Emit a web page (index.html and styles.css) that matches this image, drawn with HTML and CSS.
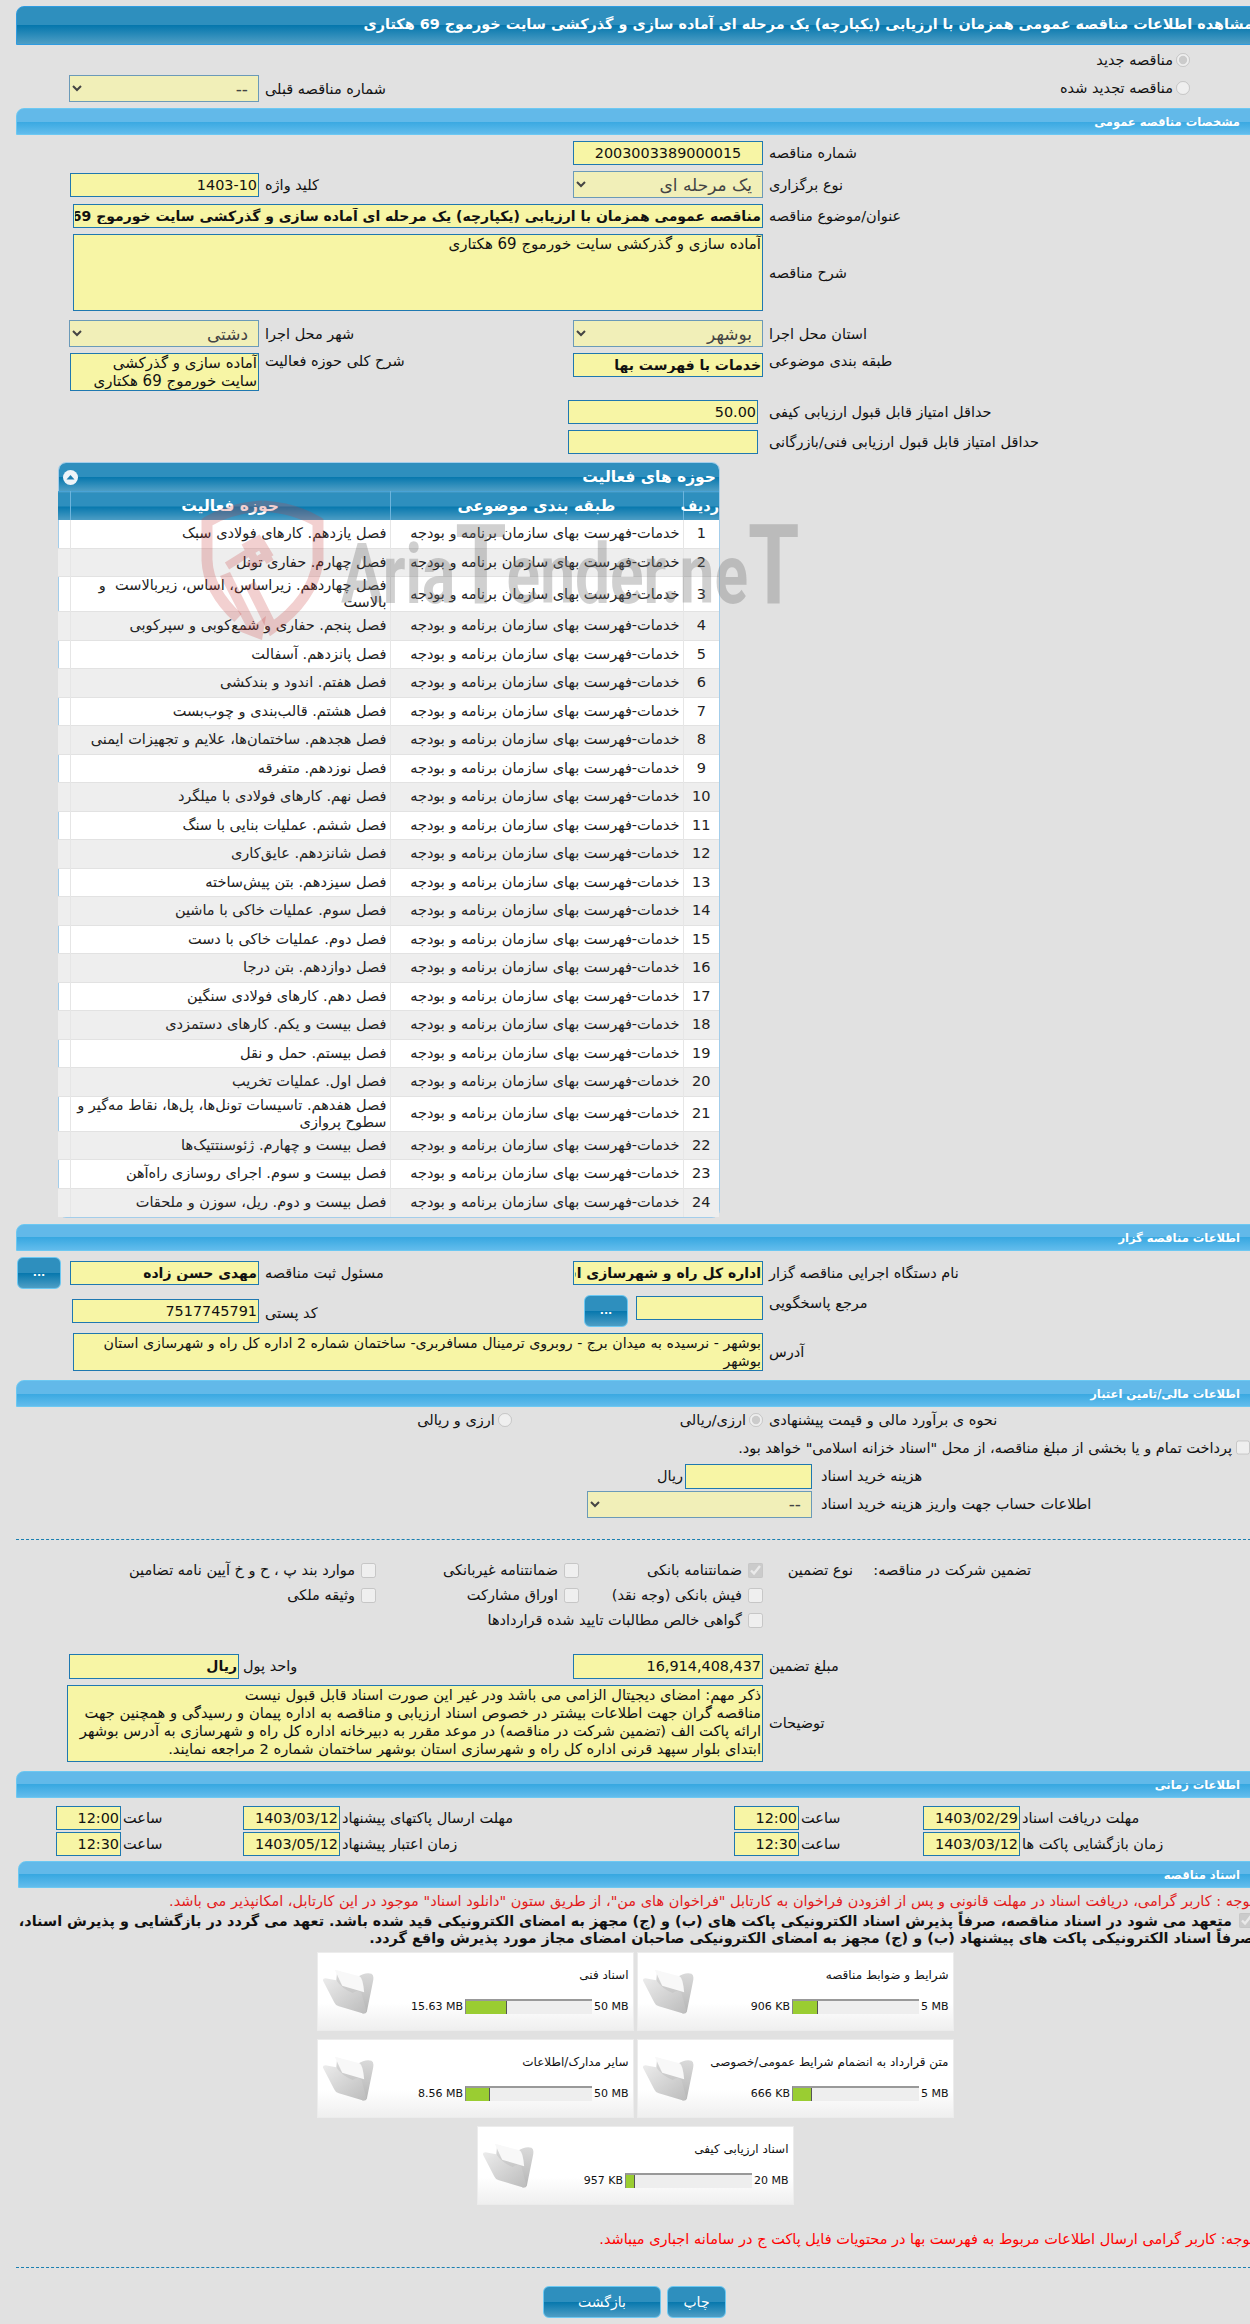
FILE: index.html
```html
<!DOCTYPE html>
<html lang="fa" dir="rtl">
<head>
    <meta charset="utf-8">
    <title>مشاهده اطلاعات مناقصه</title>
    <link rel="stylesheet" href="styles.css">
</head>
<body>
<div class="page">
    <div class="title">مشاهده اطلاعات مناقصه عمومی همزمان با ارزیابی (یکپارچه) یک مرحله ای آماده سازی و گذرکشی سایت خورموج 69 هکتاری</div>

    <div class="opt-line first"><label class="opt"><input type="radio" name="kind" disabled checked>مناقصه جدید</label></div>
    <div class="row second">
        <div class="lbl"><label class="opt"><input type="radio" name="kind" disabled>مناقصه تجدید شده</label></div>
        <div></div>
        <div class="lbl">شماره مناقصه قبلی</div>
        <select class="sel" disabled><option>--</option></select>
    </div>

    <div class="bar">مشخصات مناقصه عمومی</div>

    <div class="row">
        <div class="lbl">شماره مناقصه</div>
        <input class="fld ltr-num" readonly value="2003003389000015">
    </div>
    <div class="row">
        <div class="lbl">نوع برگزاری</div>
        <select class="sel" disabled><option>یک مرحله ای</option></select>
        <div class="lbl">کلید واژه</div>
        <input class="fld key" readonly value="1403-10">
    </div>
    <div class="row wide">
        <div class="lbl">عنوان/موضوع مناقصه</div>
        <input class="fld bold" readonly value="مناقصه عمومی همزمان با ارزیابی (یکپارچه) یک مرحله ای آماده سازی و گذرکشی سایت خورموج 69 هکتاری">
    </div>
    <div class="row wide">
        <div class="lbl">شرح مناقصه</div>
        <textarea class="fld desc" readonly>آماده سازی و گذرکشی سایت خورموج 69 هکتاری</textarea>
    </div>
    <div class="row mt9">
        <div class="lbl">استان محل اجرا</div>
        <select class="sel" disabled><option>بوشهر</option></select>
        <div class="lbl">شهر محل اجرا</div>
        <select class="sel" disabled><option>دشتی</option></select>
    </div>
    <div class="row top">
        <div class="lbl">طبقه بندی موضوعی</div>
        <input class="fld bold" readonly value="خدمات با فهرست بها">
        <div class="lbl">شرح کلی حوزه فعالیت</div>
        <textarea class="fld scope" readonly>آماده سازی و گذرکشی سایت خورموج 69 هکتاری</textarea>
    </div>
    <div class="row mt9">
        <div class="lbl">حداقل امتیاز قابل قبول ارزیابی کیفی</div>
        <input class="fld shift" readonly value="50.00">
    </div>
    <div class="row">
        <div class="lbl">حداقل امتیاز قابل قبول ارزیابی فنی/بازرگانی</div>
        <input class="fld shift" readonly>
    </div>

    <div class="panel">
        <div class="panel-head">
            <span>حوزه های فعالیت</span>
            <svg class="collapse" viewBox="0 0 15 15"><circle cx="7.5" cy="7.5" r="7.5" fill="#eef4f8"/><path d="M3.5 9.5 L7.5 5 L11.5 9.5 Z" fill="#1f7fb0"/></svg>
        </div>
        <table class="grid">
            <thead>
                <tr><th class="c-no">ردیف</th><th class="c-cat">طبقه بندی موضوعی</th><th class="c-act">حوزه فعالیت</th><th class="c-end"></th></tr>
            </thead>
            <tbody>
                <tr><td class="num">1</td><td>خدمات-فهرست بهای سازمان برنامه و بودجه</td><td>فصل یازدهم. کارهای فولادی سبک</td><td></td></tr>
                <tr><td class="num">2</td><td>خدمات-فهرست بهای سازمان برنامه و بودجه</td><td>فصل چهارم. حفاری تونل</td><td></td></tr>
                <tr class="tall"><td class="num">3</td><td>خدمات-فهرست بهای سازمان برنامه و بودجه</td><td>فصل چهاردهم. زیراساس، اساس، زیربالاست&nbsp; و بالاست</td><td></td></tr>
                <tr><td class="num">4</td><td>خدمات-فهرست بهای سازمان برنامه و بودجه</td><td>فصل پنجم. حفاری و شمع‌کوبی و سپرکوبی</td><td></td></tr>
                <tr><td class="num">5</td><td>خدمات-فهرست بهای سازمان برنامه و بودجه</td><td>فصل پانزدهم. آسفالت</td><td></td></tr>
                <tr><td class="num">6</td><td>خدمات-فهرست بهای سازمان برنامه و بودجه</td><td>فصل هفتم. اندود و بندکشی</td><td></td></tr>
                <tr><td class="num">7</td><td>خدمات-فهرست بهای سازمان برنامه و بودجه</td><td>فصل هشتم. قالب‌بندی و چوب‌بست</td><td></td></tr>
                <tr><td class="num">8</td><td>خدمات-فهرست بهای سازمان برنامه و بودجه</td><td>فصل هجدهم. ساختمان‌ها، علایم و تجهیزات ایمنی</td><td></td></tr>
                <tr><td class="num">9</td><td>خدمات-فهرست بهای سازمان برنامه و بودجه</td><td>فصل نوزدهم. متفرقه</td><td></td></tr>
                <tr><td class="num">10</td><td>خدمات-فهرست بهای سازمان برنامه و بودجه</td><td>فصل نهم. کارهای فولادی با میلگرد</td><td></td></tr>
                <tr><td class="num">11</td><td>خدمات-فهرست بهای سازمان برنامه و بودجه</td><td>فصل ششم. عملیات بنایی با سنگ</td><td></td></tr>
                <tr><td class="num">12</td><td>خدمات-فهرست بهای سازمان برنامه و بودجه</td><td>فصل شانزدهم. عایق‌کاری</td><td></td></tr>
                <tr><td class="num">13</td><td>خدمات-فهرست بهای سازمان برنامه و بودجه</td><td>فصل سیزدهم. بتن پیش‌ساخته</td><td></td></tr>
                <tr><td class="num">14</td><td>خدمات-فهرست بهای سازمان برنامه و بودجه</td><td>فصل سوم. عملیات خاکی با ماشین</td><td></td></tr>
                <tr><td class="num">15</td><td>خدمات-فهرست بهای سازمان برنامه و بودجه</td><td>فصل دوم. عملیات خاکی با دست</td><td></td></tr>
                <tr><td class="num">16</td><td>خدمات-فهرست بهای سازمان برنامه و بودجه</td><td>فصل دوازدهم. بتن درجا</td><td></td></tr>
                <tr><td class="num">17</td><td>خدمات-فهرست بهای سازمان برنامه و بودجه</td><td>فصل دهم. کارهای فولادی سنگین</td><td></td></tr>
                <tr><td class="num">18</td><td>خدمات-فهرست بهای سازمان برنامه و بودجه</td><td>فصل بیست و یکم. کارهای دستمزدی</td><td></td></tr>
                <tr><td class="num">19</td><td>خدمات-فهرست بهای سازمان برنامه و بودجه</td><td>فصل بیستم. حمل و نقل</td><td></td></tr>
                <tr><td class="num">20</td><td>خدمات-فهرست بهای سازمان برنامه و بودجه</td><td>فصل اول. عملیات تخریب</td><td></td></tr>
                <tr class="tall"><td class="num">21</td><td>خدمات-فهرست بهای سازمان برنامه و بودجه</td><td>فصل هفدهم. تاسیسات تونل‌ها، پل‌ها، نقاط مه‌گیر و سطوح پروازی</td><td></td></tr>
                <tr><td class="num">22</td><td>خدمات-فهرست بهای سازمان برنامه و بودجه</td><td>فصل بیست و چهارم. ژئوسنتتیک‌ها</td><td></td></tr>
                <tr><td class="num">23</td><td>خدمات-فهرست بهای سازمان برنامه و بودجه</td><td>فصل بیست و سوم. اجرای روسازی راه‌آهن</td><td></td></tr>
                <tr><td class="num">24</td><td>خدمات-فهرست بهای سازمان برنامه و بودجه</td><td>فصل بیست و دوم. ریل، سوزن و ملحقات</td><td></td></tr>
            </tbody>
        </table>
        <!-- site watermark -->
        <div class="watermark">
            <svg class="wm-logo" viewBox="0 0 126 140">
                <path d="M63 6 Q95 8 118 22 L118 62 Q112 100 72 128 L50 84" fill="none" stroke="#c83c3c" stroke-opacity=".24" stroke-width="11"/>
                <path d="M38 118 Q8 90 7 60 L7 22 Q30 8 63 6" fill="none" stroke="#c83c3c" stroke-opacity=".24" stroke-width="11"/>
                <path d="M27 66 L62 44 L68 54 L48 66 L56 62 L47 46 L58 40 L70 62" fill="none" stroke="#c83c3c" stroke-opacity=".24" stroke-width="8"/>
                <path d="M30 72 L56 124 L66 116 L62 140 L36 130 L46 126 L20 76 Z" fill="#c83c3c" fill-opacity=".24"/>
            </svg>
            <div class="wm-text">Aria<span class="wm-big">T</span>ender.ne<span class="wm-big">T</span></div>
        </div>
    </div>

    <div class="bar">اطلاعات مناقصه گزار</div>
    <div class="row org-a">
        <div class="lbl">نام دستگاه اجرایی مناقصه گزار</div>
        <input class="fld bold" readonly value="اداره کل راه و شهرسازی استان بوشهر">
        <div class="lbl">مسئول ثبت مناقصه</div>
        <div class="with-btn">
            <input class="fld bold key" readonly value="مهدي حسن زاده">
            <button class="btn dots" type="button">...</button>
        </div>
    </div>
    <div class="row org-b">
        <div class="lbl">مرجع پاسخگویی</div>
        <div class="ref">
            <input class="fld ref-in" readonly>
            <button class="btn dots" type="button">...</button>
        </div>
        <div class="lbl zip">کد پستی</div>
        <input class="fld zip-in" readonly value="7517745791">
    </div>
    <div class="row wide">
        <div class="lbl">آدرس</div>
        <textarea class="fld addr" readonly>بوشهر - نرسیده به میدان برج - روبروی ترمینال مسافربری- ساختمان شماره 2 اداره کل راه و شهرسازی استان بوشهر</textarea>
    </div>

    <div class="bar mt9">اطلاعات مالی/تامین اعتبار</div>
    <div class="row money">
        <div class="lbl">نحوه ی برآورد مالی و قیمت پیشنهادی</div>
        <div class="money-opts">
            <label class="opt"><input type="radio" name="cur" disabled checked>ارزی/ریالی</label>
            <label class="opt second-opt"><input type="radio" name="cur" disabled>ارزی و ریالی</label>
        </div>
    </div>
    <div class="treasury"><input type="checkbox" disabled>پرداخت تمام و یا بخشی از مبلغ مناقصه، از محل "اسناد خزانه اسلامی" خواهد بود.</div>
    <div class="row fee">
        <div class="lbl">هزینه خرید اسناد</div>
        <div class="fee-in"><input class="fld fee-box" readonly><span>ریال</span></div>
    </div>
    <div class="row fee acct">
        <div class="lbl">اطلاعات حساب جهت واریز هزینه خرید اسناد</div>
        <select class="sel" disabled><option>--</option></select>
    </div>

    <div class="dots-line"></div>

    <div class="guar g1">
        <div class="g-head"><span class="g-main">تضمین شرکت در مناقصه:</span><span>نوع تضمین</span></div>
        <label class="chk"><input type="checkbox" disabled checked>ضمانتنامه بانکی</label>
        <label class="chk"><input type="checkbox" disabled>ضمانتنامه غیربانکی</label>
        <label class="chk"><input type="checkbox" disabled>موارد بند پ ، ح و خ آیین نامه تضامین</label>
    </div>
    <div class="guar">
        <div></div>
        <label class="chk"><input type="checkbox" disabled>فیش بانکی (وجه نقد)</label>
        <label class="chk"><input type="checkbox" disabled>اوراق مشارکت</label>
        <label class="chk"><input type="checkbox" disabled>وثیقه ملکی</label>
    </div>
    <div class="guar">
        <div></div>
        <label class="chk"><input type="checkbox" disabled>گواهی خالص مطالبات تایید شده قراردادها</label>
    </div>

    <div class="row amount">
        <div class="lbl">مبلغ تضمین</div>
        <input class="fld" readonly value="16,914,408,437">
        <div class="lbl unit">واحد پول</div>
        <input class="fld bold" readonly value="ریال">
    </div>
    <div class="row wide notes-row">
        <div class="lbl">توضیحات</div>
        <textarea class="fld notes" readonly>ذکر مهم: امضای دیجیتال الزامی می باشد ودر غیر این صورت اسناد قابل قبول نیست
مناقصه گران جهت اطلاعات بیشتر در خصوص اسناد ارزیابی و مناقصه به اداره پیمان و رسیدگی و همچنین جهت ارائه پاکت الف (تضمین شرکت در مناقصه) در موعد مقرر به دبیرخانه اداره کل راه و شهرسازی به آدرس بوشهر ابتدای بلوار سپهد قرنی اداره کل راه و شهرسازی استان بوشهر ساختمان شماره 2 مراجعه نمایند.</textarea>
    </div>

    <div class="bar mt9">اطلاعات زمانی</div>
    <div class="times t1">
        <div class="lbl">مهلت دریافت اسناد</div>
        <input class="fld" readonly value="1403/02/29">
        <div class="lbl">ساعت</div>
        <input class="fld" readonly value="12:00">
        <div class="lbl">مهلت ارسال پاکتهای پیشنهاد</div>
        <input class="fld" readonly value="1403/03/12">
        <div class="lbl">ساعت</div>
        <input class="fld" readonly value="12:00">
    </div>
    <div class="times">
        <div class="lbl">زمان بازگشایی پاکت ها</div>
        <input class="fld" readonly value="1403/03/12">
        <div class="lbl">ساعت</div>
        <input class="fld" readonly value="12:30">
        <div class="lbl">زمان اعتبار پیشنهاد</div>
        <input class="fld" readonly value="1403/05/12">
        <div class="lbl">ساعت</div>
        <input class="fld" readonly value="12:30">
    </div>

    <div class="bar docs-bar">اسناد مناقصه</div>
    <div class="red-note">توجه : کاربر گرامی، دریافت اسناد در مهلت قانونی و پس از افزودن فراخوان به کارتابل "فراخوان های من"، از طریق ستون "دانلود اسناد" موجود در این کارتابل، امکانپذیر می باشد.</div>
    <div class="pledge"><input type="checkbox" disabled checked>متعهد می شود در اسناد مناقصه، صرفاً پذیرش اسناد الکترونیکی پاکت های (ب) و (ج) مجهز به امضای الکترونیکی قید شده باشد. تعهد می گردد در بازگشایی و پذیرش اسناد، صرفاً اسناد الکترونیکی پاکت های پیشنهاد (ب) و (ج) مجهز به امضای الکترونیکی صاحبان امضای مجاز مورد پذیرش واقع گردد.</div>

    <div class="cards">
        <div class="card">
            <div class="card-body">
                <div class="card-title">شرایط و ضوابط مناقصه</div>
                <div class="usage"><span>5 MB</span><div class="meter"><div class="meter-fill" style="width:19%"></div></div><span>906 KB</span></div>
            </div>
            <svg class="folder" viewBox="0 0 155 135"><use href="#folder-icon"/></svg>
        </div>
        <div class="card">
            <div class="card-body">
                <div class="card-title">اسناد فنی</div>
                <div class="usage"><span>50 MB</span><div class="meter"><div class="meter-fill" style="width:32%"></div></div><span>15.63 MB</span></div>
            </div>
            <svg class="folder" viewBox="0 0 155 135"><use href="#folder-icon"/></svg>
        </div>
        <div class="card">
            <div class="card-body">
                <div class="card-title">متن قرارداد به انضمام شرایط عمومی/خصوصی</div>
                <div class="usage"><span>5 MB</span><div class="meter"><div class="meter-fill" style="width:14%"></div></div><span>666 KB</span></div>
            </div>
            <svg class="folder" viewBox="0 0 155 135"><use href="#folder-icon"/></svg>
        </div>
        <div class="card">
            <div class="card-body">
                <div class="card-title">سایر مدارک/اطلاعات</div>
                <div class="usage"><span>50 MB</span><div class="meter"><div class="meter-fill" style="width:18%"></div></div><span>8.56 MB</span></div>
            </div>
            <svg class="folder" viewBox="0 0 155 135"><use href="#folder-icon"/></svg>
        </div>
        <div class="card">
            <div class="card-body">
                <div class="card-title">اسناد ارزیابی کیفی</div>
                <div class="usage"><span>20 MB</span><div class="meter"><div class="meter-fill" style="width:6%"></div></div><span>957 KB</span></div>
            </div>
            <svg class="folder" viewBox="0 0 155 135"><use href="#folder-icon"/></svg>
        </div>
    </div>

    <div class="red-note last">توجه: کاربر گرامی ارسال اطلاعات مربوط به فهرست بها در محتویات فایل پاکت ج در سامانه اجباری میباشد.</div>
    <div class="dots-line end"></div>
    <div class="actions">
        <button class="btn print" type="button">چاپ</button>
        <button class="btn back" type="button">بازگشت</button>
    </div>
    <div class="foot"></div>
</div>

<svg width="0" height="0" class="defs">
    <defs>
        <linearGradient id="fold-back" x1="0" y1="0" x2="0" y2="1"><stop offset="0" stop-color="#dcdcdc"/><stop offset="1" stop-color="#b4b4b4"/></linearGradient>
        <linearGradient id="fold-front" x1="0" y1="0" x2="1" y2="1"><stop offset="0" stop-color="#ececec"/><stop offset="1" stop-color="#bcbcbc"/></linearGradient>
        <g id="folder-icon">
            <path d="M45 5 L105 25 Q130 8 148 14 Q157 18 152 40 L134 128 Q130 136 120 133 L40 60 Z" fill="url(#fold-back)"/>
            <path d="M38 2 L112 22 Q122 26 126 70 L60 50 Z" fill="#f8f8f8"/>
            <path d="M3 36 Q0 28 10 28 L42 34 Q60 60 92 72 Q108 60 118 72 L132 124 Q133 136 118 132 L50 112 Q40 110 36 100 Z" fill="url(#fold-front)"/>
        </g>
    </defs>
</svg>
</body>
</html>
```

FILE: styles.css
```css
html, body {
    overflow: hidden;
}

body {
    margin: 0;
    background: #e1e1e1;
    color: #111;
    font-family: "DejaVu Sans", sans-serif;
    font-size: 14.5px;
}

.page {
    margin-left: 16px;
    margin-right: -16px;
}

.defs {
    position: absolute;
}

.title {
    box-sizing: border-box;
    margin-top: 6px;
    height: 39px;
    line-height: 35px;
    padding-right: 12px;
    border: 1px solid #2f9be0;
    border-radius: 8px 8px 0 0;
    background: linear-gradient(#2e8fbe 0, #2e8fbe 50%, #0677ad 50%, #4e9ec5 100%);
    color: #fff;
    font-size: 14.4px;
    font-weight: bold;
    white-space: nowrap;
}

.bar {
    box-sizing: border-box;
    margin-top: 6px;
    height: 27px;
    line-height: 26px;
    padding-right: 25px;
    border: 1px solid #6cc8f2;
    border-radius: 8px 8px 0 0;
    background: linear-gradient(#62b9e9 0, #62b9e9 50%, #38a8e1 50%, #62bcec 100%);
    color: #fff;
    font-size: 11.5px;
    font-weight: bold;
}

.bar.mt9 {
    margin-top: 9px;
}

.docs-bar {
    margin-top: 5px;
    margin-left: 2px;
}

.row {
    display: grid;
    grid-template-columns: 503px 190px 314px 190px 53px;
    align-items: center;
    margin-top: 6px;
}

.row.mt9 {
    margin-top: 9px;
}

.row.wide {
    grid-template-columns: 503px 690px 57px;
}

.row.top {
    align-items: start;
}

.lbl {
    padding-left: 6px;
    text-align: left;
    white-space: nowrap;
}

.opt {
    display: inline-flex;
    align-items: center;
    gap: 3px;
}

.opt input {
    margin: 0;
    width: 14px;
    height: 14px;
}

.opt-line {
    display: flex;
    align-items: center;
    height: 29px;
    padding-right: 76px;
}

.row.second {
    margin-top: 1px;
}

.row.second > .lbl:first-child {
    padding: 0 76px 0 0;
    text-align: right;
}

.fld {
    box-sizing: border-box;
    display: block;
    width: 100%;
    height: 24px;
    margin: 0;
    padding: 0 1px;
    border: 1px solid #1f78b0;
    border-radius: 0;
    outline: none;
    background: #f7f5a5;
    color: #111;
    font-family: "DejaVu Sans", sans-serif;
    font-size: 14.4px;
    resize: none;
    overflow: hidden;
}

.fld.bold {
    font-weight: bold;
    font-size: 14px;
}

.ltr-num {
    text-align: center;
}

.sel {
    box-sizing: border-box;
    width: 100%;
    height: 27px;
    margin: 0;
    padding: 0 6px 0 0;
    border: 1px solid #6b9ab8;
    border-radius: 0;
    background: #f1efb8;
    color: #444;
    font-family: "DejaVu Sans", sans-serif;
    font-size: 17px;
    opacity: 1;
}

.key {
    width: 189px;
}

.desc {
    height: 77px;
    font-size: 15px;
}

.scope {
    width: 189px;
    height: 38px;
    font-size: 15px;
    line-height: 18px;
}

.shift {
    margin-right: 5px;
}

/* activity table */
.panel {
    position: relative;
    box-sizing: border-box;
    width: 662px;
    margin: 8px 546px 0 0;
    border: 1px solid #a3cdea;
    border-radius: 8px;
    background: #fff;
}

.panel-head {
    display: flex;
    justify-content: space-between;
    align-items: center;
    box-sizing: border-box;
    height: 28px;
    padding: 0 3px 0 4px;
    border-radius: 7px 7px 0 0;
    background: linear-gradient(#2e8fbe 0, #2e8fbe 50%, #0677ad 50%, #4e9ec5 100%);
    color: #fff;
    font-size: 15.5px;
    font-weight: bold;
}

.collapse {
    width: 15px;
    height: 15px;
}

.grid {
    width: 100%;
    border-collapse: collapse;
    table-layout: fixed;
    font-size: 14.5px;
}

.grid th {
    box-sizing: border-box;
    height: 28px;
    padding: 0;
    border-left: 1px solid #6db4dc;
    border-top: 1px solid #4aa3d6;
    background: linear-gradient(#2e8fbe 0, #2e8fbe 50%, #0677ad 50%, #4e9ec5 100%);
    color: #fff;
    font-size: 15.5px;
    font-weight: bold;
}

.grid th.c-no {
    font-size: 14.5px;
}

.grid th:last-child {
    border-left: 0;
}

.c-no { width: 36px; }
.c-cat { width: 293px; }
.c-act { width: 320px; }
.c-end { width: 12px; }

.grid td {
    box-sizing: border-box;
    height: 28.5px;
    padding: 0 3px;
    border-top: 1px solid #e2e2e2;
    border-left: 1px solid #e6e6e6;
    text-align: right;
    line-height: 17px;
    color: #222;
}

.grid tbody tr:first-child td {
    border-top: 0;
}

.grid tr.tall td {
    height: 35px;
}

.grid td:last-child {
    border-left: 0;
}

.grid td.num {
    text-align: center;
    font-size: 14.5px;
}

.grid tbody tr:nth-child(even) td {
    background: #eee;
}

.watermark {
    position: absolute;
    left: 141px;
    top: 37px;
    pointer-events: none;
}

.wm-logo {
    display: block;
    width: 126px;
    height: 140px;
}

.wm-text {
    position: absolute;
    left: 141px;
    top: 20px;
    direction: ltr;
    white-space: nowrap;
    transform: scaleX(.74);
    transform-origin: left top;
    color: rgba(110, 110, 110, .32);
    font-family: Roboto, sans-serif;
    font-size: 84px;
    font-weight: bold;
    line-height: 90px;
}

.wm-big {
    font-size: 112px;
}

/* organiser */
.panel + .bar {
    margin-top: 6px;
}

.row.org-a {
    height: 32px;
}

.with-btn {
    display: flex;
    align-items: center;
    gap: 9px;
    margin-left: -53px;
}

.btn {
    border: 1px solid #6cc8f2;
    border-radius: 6px;
    background: linear-gradient(#2e8fbe 0, #2e8fbe 50%, #0677ad 50%, #4e9ec5 100%);
    color: #fff;
    font-family: "DejaVu Sans", sans-serif;
    font-size: 14px;
    padding: 0;
}

.dots {
    flex: none;
    width: 44px;
    height: 32px;
    font-size: 11px;
    font-weight: bold;
}

.row.org-b {
    height: 32px;
    align-items: start;
}

.ref {
    display: flex;
    gap: 8px;
    margin-left: -55px;
}

.ref-in {
    width: 127px;
    margin-top: 1px;
}

.zip {
    padding-top: 10px;
}

.zip-in {
    width: 187px;
    margin-top: 4px;
}

.addr {
    height: 38px;
    font-size: 14.2px;
    line-height: 18px;
}

/* financial */
.money {
    height: 27px;
    margin-top: 0;
}

.money-opts {
    display: flex;
    grid-column: 2 / 5;
}

.second-opt {
    margin-right: 168px;
}

.treasury {
    display: flex;
    align-items: center;
    gap: 3px;
    height: 24px;
    margin-top: 2px;
    padding-right: 16px;
}

.treasury input {
    margin: 0 0 0 1px;
    width: 14px;
    height: 15px;
}

.fee {
    grid-template-columns: 454px 225px 1fr;
    margin-top: 4px;
}

.fee .lbl {
    padding-left: 9px;
}

.fee-in {
    display: flex;
    align-items: center;
    gap: 2px;
}

.fee-box {
    width: 127px;
    height: 25px;
}

.acct {
    margin-top: 2px;
}

.dots-line {
    margin-top: 21px;
    border-top: 1px dashed #1a7fb0;
}

.guar {
    display: grid;
    grid-template-columns: 503px 184px 203px 1fr;
    align-items: center;
    height: 25px;
}

.guar.g1 {
    margin-top: 18px;
}

.g-head {
    display: flex;
    gap: 20px;
    padding-right: 235px;
}

.g-main {
    width: 158px;
    white-space: nowrap;
}

.chk {
    display: flex;
    align-items: center;
    gap: 6px;
    white-space: nowrap;
}

.chk input {
    flex: none;
    margin: 0;
    width: 15px;
    height: 15px;
}

.row.amount {
    grid-template-columns: 503px 190px 334px 170px 53px;
    margin-top: 21px;
}

.row.amount .fld {
    height: 25px;
}

.row.amount .unit {
    padding-left: 4px;
}

.row.notes-row {
    grid-template-columns: 503px 696px 51px;
}

.notes {
    height: 77px;
    font-size: 14.7px;
    line-height: 18px;
}

.times {
    display: grid;
    grid-template-columns: 246px 97px 124px 65px 394px 97px 122px 65px 40px;
    align-items: center;
    margin-top: 2px;
}

.times.t1 {
    margin-top: 8px;
}

.times .lbl {
    padding-left: 2px;
}

/* documents */
.red-note {
    height: 24px;
    margin-top: 1px;
    padding-right: 12px;
    line-height: 24px;
    color: #e21b1b;
    white-space: nowrap;
}

.pledge {
    box-sizing: border-box;
    padding-right: 12px;
    font-size: 14.4px;
    font-weight: bold;
    line-height: 17px;
    color: #111;
}

.pledge input {
    float: right;
    margin: 0 0 0 7px;
    width: 15px;
    height: 15px;
}

.cards {
    display: grid;
    grid-template-columns: 317px 317px;
    justify-content: center;
    gap: 8px 3px;
    width: 638px;
    margin: 5px 312px 0 0;
}

.card {
    display: flex;
    box-sizing: border-box;
    height: 79px;
    padding: 15px 4px 0;
    border: 1px solid #ececec;
    background: linear-gradient(#fff 0, #fff 65%, #efefef 100%);
}

.card:last-child {
    grid-column: 1 / 3;
    width: 317px;
    justify-self: center;
}

.card-body {
    flex: 1;
}

.card-title {
    height: 31px;
    line-height: 14px;
    font-size: 12px;
    white-space: nowrap;
}

.usage {
    display: flex;
    align-items: center;
    gap: 2px;
    font-size: 11px;
    direction: ltr;
    flex-direction: row-reverse;
    justify-content: flex-start;
}

.meter {
    box-sizing: border-box;
    width: 127px;
    height: 15px;
    border-top: 2px solid #999;
    border-left: 1px solid #888;
    background: #eee;
}

.meter-fill {
    height: 100%;
    background: #9acd32;
    border-right: 1px solid #555;
}

.folder {
    flex: none;
    width: 52px;
    height: 45px;
    margin: 1px 12px 0 0;
}

.red-note.last {
    margin-top: 22px;
    height: 24px;
    color: #f00;
}

.dots-line.end {
    margin-top: 16px;
}

.actions {
    display: flex;
    justify-content: flex-start;
    gap: 6px;
    margin-top: 18px;
    padding-right: 540px;
}

.print {
    width: 59px;
    height: 32px;
}

.back {
    width: 118px;
    height: 32px;
}

.foot {
    height: 1px;
    margin-top: 6px;
    background: #fff;
}
```
